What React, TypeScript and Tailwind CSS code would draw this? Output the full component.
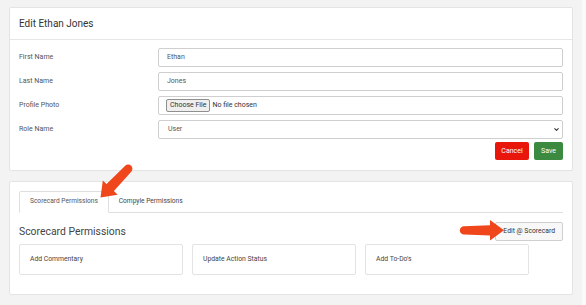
import { ChevronDown } from 'lucide-react';

const fields = [
  { label: 'First Name', value: 'Ethan' },
  { label: 'Last Name', value: 'Jones' },
];

const permissions = ['Add Commentary', 'Update Action Status', "Add To-Do's"];

// orange callout arrow, pointing right in its own box
const Arrow = ({ className }: { className: string }) => (
  <svg className={className} width="48" height="24" viewBox="0 0 48 24">
    <path
      d="M6 8.2 L32 7.2 L32 2 L46 12.3 L32 22.6 L32 17.4 L6 16.6 A4.2 4.2 0 0 1 6 8.2 Z"
      fill="#f0461c"
    />
  </svg>
);

export default function App() {
  return (
    <div className="relative flex h-[305px] w-[586px] bg-[#f3f3f3] font-['Roboto',sans-serif] text-[#555]">
      <div className="flex w-[582px] flex-col gap-[10px] pl-[9px] pr-[9px] pt-[7px]">
        {/* edit user card */}
        <div className="rounded-[2px] border border-[#e4e4e4] bg-white">
          <div className="flex h-[32px] items-center border-b border-[#e6e6e6] px-[9px]">
            <h2 className="text-[10px] text-[#333]">Edit Ethan Jones</h2>
          </div>
          <div className="flex flex-col gap-[5px] px-[9px] pb-[10px] pt-[8px]">
            {fields.map((f) => (
              <div key={f.label} className="grid grid-cols-[139px_1fr] items-center">
                <label className="text-[7px]">{f.label}</label>
                <div className="flex h-[19px] items-center rounded-[2px] border border-[#cfcfcf] px-[8px] text-[7px] text-[#555]">
                  {f.value}
                </div>
              </div>
            ))}
            <div className="grid grid-cols-[139px_1fr] items-center">
              <label className="text-[7px]">Profile Photo</label>
              <div className="flex h-[19px] items-center gap-[2px] rounded-[2px] border border-[#cfcfcf] px-[7px] text-[7px] text-[#333]">
                <span className="flex h-[13px] items-center rounded-[2px] border border-[#8f8f8f] bg-[#efefef] px-[3px]">
                  Choose File
                </span>
                <span>No file chosen</span>
              </div>
            </div>
            <div className="grid grid-cols-[139px_1fr] items-center">
              <label className="text-[7px]">Role Name</label>
              <div className="flex h-[19px] items-center justify-between rounded-[2px] border border-[#cfcfcf] pl-[9px] pr-[2px] text-[7px]">
                <span>User</span>
                <ChevronDown className="h-[7px] w-[7px] text-[#333]" strokeWidth={3.5} />
              </div>
            </div>
            <div className="mt-[-2px] flex justify-end gap-[5px]">
              <button className="h-[18px] w-[34px] rounded-[2px] bg-[#e8160b] text-[7px] text-white">Cancel</button>
              <button className="h-[18px] w-[29px] rounded-[2px] bg-[#3c8a3f] text-[7px] text-white">Save</button>
            </div>
          </div>
        </div>

        {/* permissions card */}
        <div className="rounded-[2px] border border-[#e4e4e4] bg-white px-[9px] pb-[19px] pt-[9px]">
          <div className="flex h-[22px] items-end border-b border-[#dedede] text-[6.6px]">
            <div className="-mb-px flex h-[22px] items-center rounded-t-[2px] border border-b-white border-[#dedede] bg-white px-[10px] text-[#555]">
              Scorecard Permissions
            </div>
            <div className="flex h-[21px] items-center px-[10px] text-[#444]">Compyle Permissions</div>
          </div>
          <div className="mt-[9px] flex h-[19px] items-center justify-between">
            <h3 className="text-[10.4px] text-[#444]">Scorecard Permissions</h3>
            <button className="h-[19px] rounded-[2px] border border-[#cfcfcf] bg-[#f8f8f8] px-[7px] text-[6.8px] text-[#333]">
              Edit @ Scorecard
            </button>
          </div>
          <div className="mt-[3px] flex gap-[9px]">
            {permissions.map((p) => (
              <div
                key={p}
                className="flex h-[31px] w-[164px] items-center rounded-[2px] border border-[#e3e3e3] px-[10px] text-[6.8px] text-[#444]"
              >
                {p}
              </div>
            ))}
          </div>
        </div>
      </div>
      <div className="w-[4px] bg-[#fafafa]" />

      <Arrow className="absolute left-[92px] top-[170px] rotate-[134deg]" />
      <Arrow className="absolute left-[458px] top-[218px]" />
    </div>
  );
}
